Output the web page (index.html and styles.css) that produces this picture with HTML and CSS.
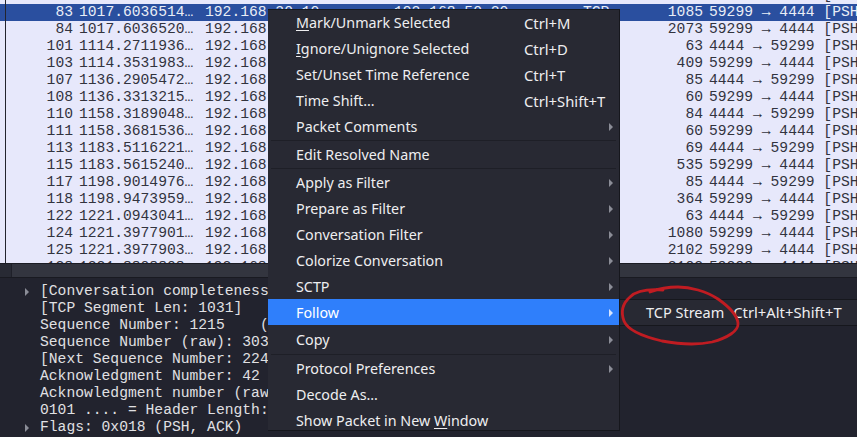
FILE: index.html
```html
<!DOCTYPE html>
<html lang="en">

    <head>
        <meta name="viewport" content="width=device-width, initial-scale=1">
        <title>Wireshark packet menu</title>
        <link rel="stylesheet" href="styles.css">
    </head>

    <body>
        <main class="window">
            <section class="packets">
                <div class="row row-cut"><span></span><span></span><span></span><span></span><span></span><span></span><span>             [PSH, ACK]</span></div>
                <div class="row selected"><span class="num">83</span><span>1017.6036514…</span><span>192.168.30.10</span><span>192.168.50.20</span><span>TCP</span><span class="num">1085</span><span>59299 → 4444 [PSH, ACK]</span></div>
                <div class="row"><span class="num">84</span><span>1017.6036520…</span><span>192.168.30.10</span><span>192.168.50.20</span><span>TCP</span><span class="num">2073</span><span>59299 → 4444 [PSH, ACK]</span></div>
                <div class="row"><span class="num">101</span><span>1114.2711936…</span><span>192.168.50.20</span><span>192.168.30.10</span><span>TCP</span><span class="num">63</span><span>4444 → 59299 [PSH, ACK]</span></div>
                <div class="row"><span class="num">103</span><span>1114.3531983…</span><span>192.168.30.10</span><span>192.168.50.20</span><span>TCP</span><span class="num">409</span><span>59299 → 4444 [PSH, ACK]</span></div>
                <div class="row"><span class="num">107</span><span>1136.2905472…</span><span>192.168.50.20</span><span>192.168.30.10</span><span>TCP</span><span class="num">85</span><span>4444 → 59299 [PSH, ACK]</span></div>
                <div class="row"><span class="num">108</span><span>1136.3313215…</span><span>192.168.30.10</span><span>192.168.50.20</span><span>TCP</span><span class="num">60</span><span>59299 → 4444 [PSH, ACK]</span></div>
                <div class="row"><span class="num">110</span><span>1158.3189048…</span><span>192.168.50.20</span><span>192.168.30.10</span><span>TCP</span><span class="num">84</span><span>4444 → 59299 [PSH, ACK]</span></div>
                <div class="row"><span class="num">111</span><span>1158.3681536…</span><span>192.168.30.10</span><span>192.168.50.20</span><span>TCP</span><span class="num">60</span><span>59299 → 4444 [PSH, ACK]</span></div>
                <div class="row"><span class="num">113</span><span>1183.5116221…</span><span>192.168.50.20</span><span>192.168.30.10</span><span>TCP</span><span class="num">69</span><span>4444 → 59299 [PSH, ACK]</span></div>
                <div class="row"><span class="num">115</span><span>1183.5615240…</span><span>192.168.30.10</span><span>192.168.50.20</span><span>TCP</span><span class="num">535</span><span>59299 → 4444 [PSH, ACK]</span></div>
                <div class="row"><span class="num">117</span><span>1198.9014976…</span><span>192.168.50.20</span><span>192.168.30.10</span><span>TCP</span><span class="num">85</span><span>4444 → 59299 [PSH, ACK]</span></div>
                <div class="row"><span class="num">118</span><span>1198.9473959…</span><span>192.168.30.10</span><span>192.168.50.20</span><span>TCP</span><span class="num">364</span><span>59299 → 4444 [PSH, ACK]</span></div>
                <div class="row"><span class="num">122</span><span>1221.0943041…</span><span>192.168.50.20</span><span>192.168.30.10</span><span>TCP</span><span class="num">63</span><span>4444 → 59299 [PSH, ACK]</span></div>
                <div class="row"><span class="num">124</span><span>1221.3977901…</span><span>192.168.30.10</span><span>192.168.50.20</span><span>TCP</span><span class="num">1080</span><span>59299 → 4444 [PSH, ACK]</span></div>
                <div class="row"><span class="num">125</span><span>1221.3977903…</span><span>192.168.30.10</span><span>192.168.50.20</span><span>TCP</span><span class="num">2102</span><span>59299 → 4444 [PSH, ACK]</span></div>
                <div class="row"><span class="num">128</span><span>1221.8808808…</span><span>192.168.30.10</span><span>192.168.50.20</span><span>TCP</span><span class="num">2102</span><span>59299 → 4444 [PSH, ACK]</span></div>
            </section>

            <div class="hscroll"><i class="hscroll-left"></i></div>

            <section class="details">
                <div class="line has-arrow">[Conversation completeness: Complete, WITH_DATA (31)]</div>
                <div class="line">[TCP Segment Len: 1031]</div>
                <div class="line">Sequence Number: 1215    (relative sequence number)</div>
                <div class="line">Sequence Number (raw): 3034198211</div>
                <div class="line">[Next Sequence Number: 2246    (relative sequence number)]</div>
                <div class="line">Acknowledgment Number: 42    (relative ack number)</div>
                <div class="line">Acknowledgment number (raw): 1287546720</div>
                <div class="line">0101 .... = Header Length: 20 bytes (5)</div>
                <div class="line has-arrow">Flags: 0x018 (PSH, ACK)</div>
            </section>

            <nav class="menu">
                <div class="item"><span><u>M</u>ark/Unmark Selected</span><kbd>Ctrl+M</kbd></div>
                <div class="item"><span><u>I</u>gnore/Unignore Selected</span><kbd>Ctrl+D</kbd></div>
                <div class="item"><span>Set/Unset Time Reference</span><kbd>Ctrl+T</kbd></div>
                <div class="item"><span>Time Shift…</span><kbd>Ctrl+Shift+T</kbd></div>
                <div class="item sub"><span>Packet Comments</span></div>
                <hr>
                <div class="item"><span>Edit Resolved Name</span></div>
                <hr>
                <div class="item sub"><span>Apply as Filter</span></div>
                <div class="item sub"><span>Prepare as Filter</span></div>
                <div class="item sub"><span>Conversation Filter</span></div>
                <div class="item sub"><span>Colorize Conversation</span></div>
                <div class="item sub"><span>SCTP</span></div>
                <div class="item sub active"><span>Follow</span></div>
                <div class="item sub copy"><span>Copy</span></div>
                <hr>
                <div class="item sub"><span>Protocol Preferences</span></div>
                <div class="item"><span>Decode As…</span></div>
                <div class="item"><span>Show Packet in New <u>W</u>indow</span></div>
            </nav>

            <nav class="submenu">
                <span>TCP Stream</span><kbd>Ctrl+Alt+Shift+T</kbd>
            </nav>

            <svg class="scribble" viewBox="0 0 857 437" aria-hidden="true">
                <path d="M663 290 C650 289 637 290 630 297 C622 304 621 313 624 321 C628 331 645 337 662 341 C678 344 698 345 712 342 C727 338 739 331 738 323 C737 315 728 306 718 299 C706 291 690 287 678 287 C668 287 658 289 650 292" />
            </svg>
        </main>
    </body>

</html>
```

FILE: styles.css
```css
:root {
    --list-bg: #e7e8fb;
    --list-fg: #32333e;
    --selected: #2a4f9f;
    --dark-bg: #22232e;
    --menu-bg: #282933;
    --menu-fg: #eeeef0;
    --accent: #2f7ffb;
    --arrow: #8b8d97;
}

html,
body {
    margin: 0;
    height: 100%;
    overflow: hidden;
}

.window {
    position: relative;
    width: 857px;
    height: 437px;
    overflow: hidden;
    background-color: var(--dark-bg);
    font-family: "Liberation Mono", monospace;
    font-size: 14.67px;
}

.packets {
    position: relative;
    height: 263px;
    overflow: hidden;
    background-color: var(--list-bg);
    color: var(--list-fg);

    &::before {
        content: "";
        position: absolute;
        z-index: 1;
        top: 0;
        bottom: 0;
        left: 5px;
        width: 1px;
        background-color: #23242e;
    }
}

.row {
    display: grid;
    grid-template-columns: 73px 120px 183px 183px 60px 54px 1fr;
    column-gap: 6px;
    height: 17px;
    line-height: 17px;
    white-space: pre;

    & .num {
        text-align: right;
    }
}

.row-cut {
    margin-top: -13px;
}

.selected {
    background-color: var(--selected);
    color: #e9edf6;
}

.hscroll {
    height: 13px;
    border-top: 1px solid #1b1c24;
    background-color: #33353f;

    & .hscroll-left {
        display: block;
        width: 11px;
        height: 100%;
        background-color: #282a34;
        border-right: 1px solid #1f2029;
    }
}

.details {
    padding-top: 5px;
    border-top: 1px solid #191a21;
    color: #e0e0e3;
}

.line {
    position: relative;
    height: 17px;
    padding-left: 40px;
    line-height: 17px;
    white-space: pre;
}

.has-arrow::before {
    content: "";
    position: absolute;
    top: 5px;
    left: 25px;
    border-left: 4px solid var(--arrow);
    border-top: 4px solid transparent;
    border-bottom: 4px solid transparent;
}

.menu {
    position: absolute;
    top: 9px;
    left: 268px;
    width: 351px;
    border: solid #16171d;
    border-width: 1px 1px 1px 0;
    background-color: var(--menu-bg);
    color: var(--menu-fg);
    font-family: "Noto Sans", sans-serif;
    font-size: 14.3px;

    & hr {
        height: 1px;
        margin: 0 3px 1px;
        border: 0;
        background-color: #1e1f27;
    }

    & u {
        text-underline-offset: 2px;
    }
}

kbd {
    font: inherit;
    font-size: 14.8px;
}

.item {
    position: relative;
    display: flex;
    height: 26px;
    padding-left: 28px;
    line-height: 26px;

    & span {
        width: 228px;
    }

    &:last-child {
        height: 22px;
    }
}

.copy {
    height: 27px;
    margin-top: 2px;
}

.sub::after {
    content: "";
    position: absolute;
    top: 9px;
    right: 6px;
    border-left: 4px solid var(--arrow);
    border-top: 4px solid transparent;
    border-bottom: 4px solid transparent;
}

.active {
    margin-top: -1px;
    margin-bottom: 1px;
    background-color: var(--accent);
    color: #fff;
    line-height: 28px;

    &::after {
        top: 10px;
        border-left-color: #d5e4ff;
    }
}

.submenu {
    position: absolute;
    top: 299px;
    left: 620px;
    display: flex;
    gap: 9px;
    width: 211px;
    height: 25px;
    padding-left: 26px;
    border: solid #16171d;
    border-width: 1px 0;
    background-color: var(--menu-bg);
    color: var(--menu-fg);
    font-family: "Noto Sans", sans-serif;
    font-size: 14.5px;
    line-height: 25px;
}

.scribble {
    position: absolute;
    inset: 0;
    width: 857px;
    height: 437px;
    pointer-events: none;

    & path {
        fill: none;
        stroke: #c01c22;
        stroke-width: 2.8;
        stroke-linecap: round;
    }
}
```
